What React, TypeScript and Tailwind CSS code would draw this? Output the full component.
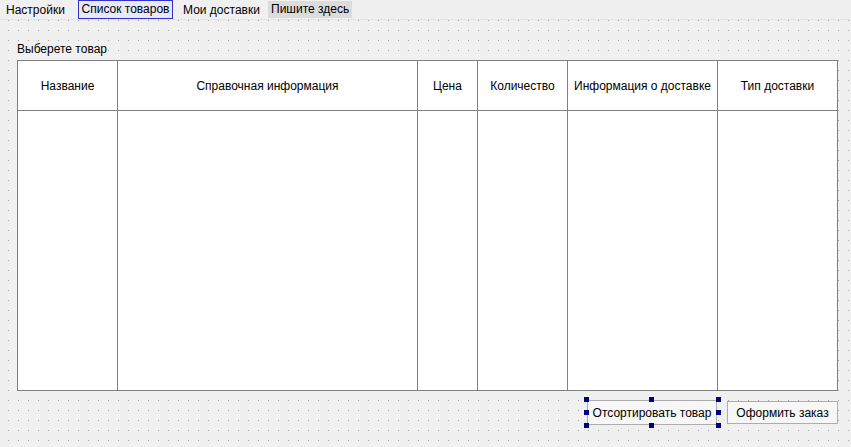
import React from "react";

const columns = [
  { title: "Название", width: "w-[99px]" },
  { title: "Справочная информация", width: "w-[300px] border-l" },
  { title: "Цена", width: "w-[60px] border-l" },
  { title: "Количество", width: "w-[90px] border-l" },
  { title: "Информация о доставке", width: "w-[150px] border-l" },
  { title: "Тип доставки", width: "w-[120px] border-l" },
];

function Handle({ pos }: { pos: string }) {
  return <span className={`absolute w-[5px] h-[5px] bg-[#000080] ${pos}`} />;
}

export default function App() {
  return (
    <div
      className="w-[851px] h-[447px] overflow-hidden bg-[#f0f0f0] text-[12px] text-[#000] flex flex-col"
      style={{ fontFamily: '"Liberation Sans", Arial, sans-serif' }}
    >
      {/* menu bar */}
      <div className="h-[20px] flex items-center border-b border-[#e3e3e3] shrink-0 whitespace-nowrap">
        <div className="w-[78px] pl-[6px] leading-[18px]">Настройки</div>
        <div className="w-[95px] h-[19px] border border-[#3333cc] bg-[#e8e8fb] flex items-center justify-center leading-[17px]">
          Список товаров
        </div>
        <div className="w-[95px] pl-[10px] leading-[18px]">Мои доставки</div>
        <div className="h-[17px] px-[3px] bg-[#dcdcdc] flex items-center leading-[17px]">
          Пишите здесь
        </div>
      </div>

      {/* form canvas */}
      <div className="flex-1 flex flex-col pl-[17px] pr-[13px] bg-[radial-gradient(circle_at_8.5px_0.5px,#a4a4a4_0.6px,transparent_0.7px)] bg-[size:10px_10px]">
        <div className="mt-[21px] h-[16px] leading-[16px]">Выберете товар</div>
        <div className="mt-[3px] w-[821px] h-[331px] bg-white border border-[#808080] flex flex-col">
          <div className="h-[50px] flex border-b border-[#808080]">
            {columns.map((c) => (
              <div
                key={c.title}
                className={`${c.width} border-[#808080] flex items-center justify-center whitespace-nowrap`}
              >
                {c.title}
              </div>
            ))}
          </div>
          <div className="flex-1 flex">
            {columns.map((c) => (
              <div key={c.title} className={`${c.width} border-[#808080]`} />
            ))}
          </div>
        </div>

        <div className="mt-[9px] flex justify-end items-center gap-[10px]">
          <div className="relative">
            <button className="w-[130px] h-[25px] border border-[#adadad] bg-[#f7f7f7] flex items-center justify-center">
              Отсортировать товар
            </button>
            <Handle pos="-left-[3px] -top-[3px]" />
            <Handle pos="left-[62px] -top-[3px]" />
            <Handle pos="-right-[4px] -top-[3px]" />
            <Handle pos="-left-[3px] top-[10px]" />
            <Handle pos="-right-[4px] top-[10px]" />
            <Handle pos="-left-[3px] -bottom-[3px]" />
            <Handle pos="left-[62px] -bottom-[3px]" />
            <Handle pos="-right-[4px] -bottom-[3px]" />
          </div>
          <button className="w-[111px] h-[23px] border border-[#adadad] bg-[#f7f7f7] flex items-center justify-center">
            Оформить заказ
          </button>
        </div>
      </div>
    </div>
  );
}
